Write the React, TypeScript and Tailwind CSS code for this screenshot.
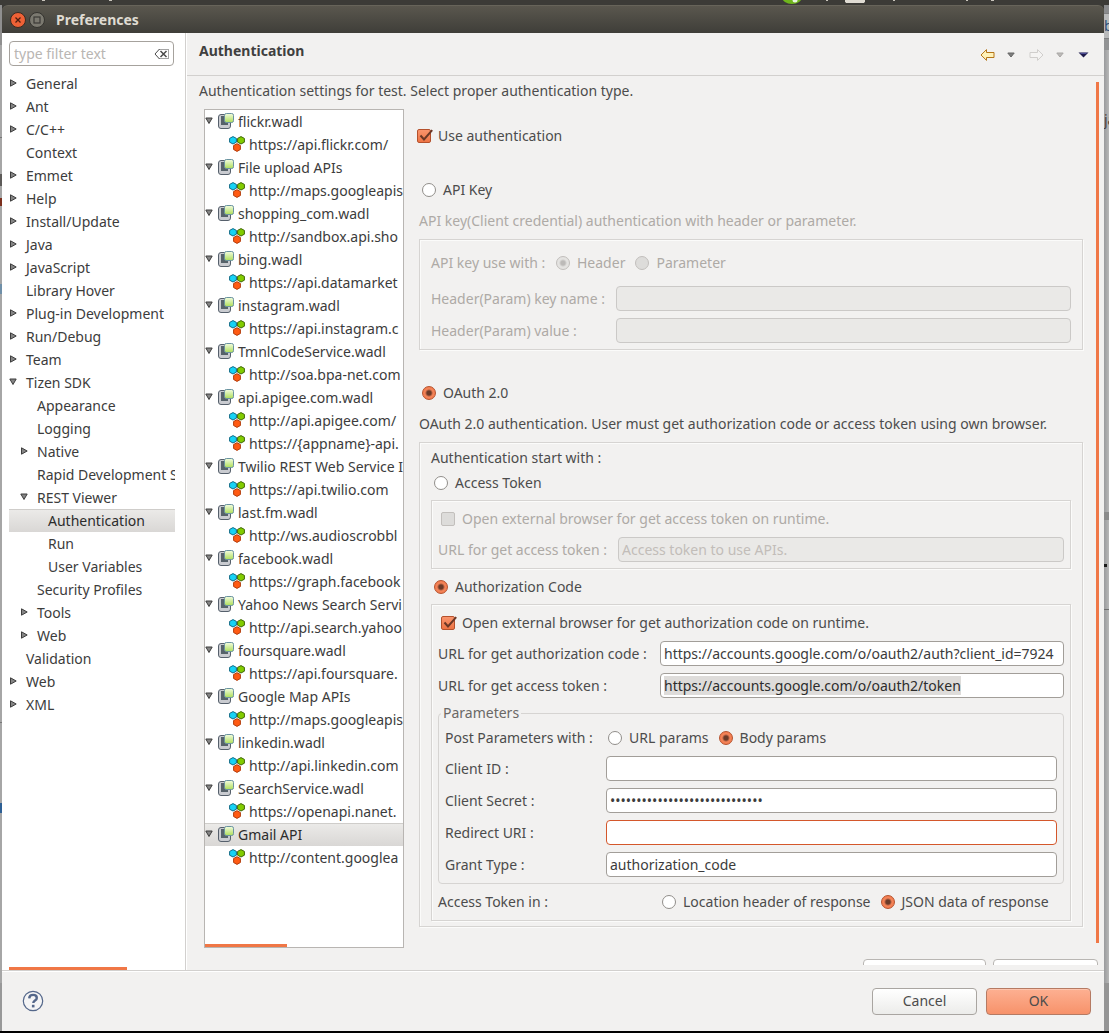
import { useEffect, useRef, type ReactNode } from "react";

type NavItem = { label: string; level: number; arrow?: "open" | "closed"; selected?: boolean };

const navItems: NavItem[] = [
  { label: "General", level: 0, arrow: "closed" },
  { label: "Ant", level: 0, arrow: "closed" },
  { label: "C/C++", level: 0, arrow: "closed" },
  { label: "Context", level: 0 },
  { label: "Emmet", level: 0, arrow: "closed" },
  { label: "Help", level: 0, arrow: "closed" },
  { label: "Install/Update", level: 0, arrow: "closed" },
  { label: "Java", level: 0, arrow: "closed" },
  { label: "JavaScript", level: 0, arrow: "closed" },
  { label: "Library Hover", level: 0 },
  { label: "Plug-in Development", level: 0, arrow: "closed" },
  { label: "Run/Debug", level: 0, arrow: "closed" },
  { label: "Team", level: 0, arrow: "closed" },
  { label: "Tizen SDK", level: 0, arrow: "open" },
  { label: "Appearance", level: 1 },
  { label: "Logging", level: 1 },
  { label: "Native", level: 1, arrow: "closed" },
  { label: "Rapid Development S", level: 1 },
  { label: "REST Viewer", level: 1, arrow: "open" },
  { label: "Authentication", level: 2, selected: true },
  { label: "Run", level: 2 },
  { label: "User Variables", level: 2 },
  { label: "Security Profiles", level: 1 },
  { label: "Tools", level: 1, arrow: "closed" },
  { label: "Web", level: 1, arrow: "closed" },
  { label: "Validation", level: 0 },
  { label: "Web", level: 0, arrow: "closed" },
  { label: "XML", level: 0, arrow: "closed" },
];

const indents = ["pl-0", "pl-[11px]", "pl-[22px]"];

const services: { name: string; urls: string[]; selected?: boolean }[] = [
  { name: "flickr.wadl", urls: ["https://api.flickr.com/"] },
  { name: "File upload APIs", urls: ["http://maps.googleapis"] },
  { name: "shopping_com.wadl", urls: ["http://sandbox.api.sho"] },
  { name: "bing.wadl", urls: ["https://api.datamarket"] },
  { name: "instagram.wadl", urls: ["https://api.instagram.c"] },
  { name: "TmnlCodeService.wadl", urls: ["http://soa.bpa-net.com"] },
  { name: "api.apigee.com.wadl", urls: ["http://api.apigee.com/", "https://{appname}-api."] },
  { name: "Twilio REST Web Service I", urls: ["https://api.twilio.com"] },
  { name: "last.fm.wadl", urls: ["http://ws.audioscrobbl"] },
  { name: "facebook.wadl", urls: ["https://graph.facebook"] },
  { name: "Yahoo News Search Servi", urls: ["http://api.search.yahoo"] },
  { name: "foursquare.wadl", urls: ["https://api.foursquare."] },
  { name: "Google Map APIs", urls: ["http://maps.googleapis"] },
  { name: "linkedin.wadl", urls: ["http://api.linkedin.com"] },
  { name: "SearchService.wadl", urls: ["https://openapi.nanet."] },
  { name: "Gmail API", urls: ["http://content.googlea"], selected: true },
];

function Arrow({ kind }: { kind: "open" | "closed" }) {
  return (
    <svg viewBox="0 0 8 8" className="mb-0.5 size-2 shrink-0" fill="#858585" stroke="#3d3d3d" strokeWidth="1">
      {kind === "open" ? <path d="M.8 1h6.400L4 6.500z" /> : <path d="M1.500.800l5.700 3.200-5.700 3.200z" />}
    </svg>
  );
}

function WadlIcon() {
  return (
    <svg viewBox="0 0 16 16" className="size-4 shrink-0">
      <defs>
        <linearGradient id="note" x1="0" y1="0" x2="0" y2="1">
          <stop offset="0" stopColor="#f3fce2" />
          <stop offset="1" stopColor="#aede58" />
        </linearGradient>
      </defs>
      <rect x="0.5" y="1.5" width="12" height="14" rx="2.500" fill="#c9cbd0" stroke="#56606c" />
      <rect x="3" y="3" width="7" height="9" fill="#56626a" />
      <rect x="6.500" y="0.500" width="9" height="9" rx="1.800" fill="url(#note)" stroke="#6a93a0" />
    </svg>
  );
}

function EndpointIcon() {
  return (
    <svg viewBox="0 0 16 16" className="size-4 shrink-0">
      <path d="M4 .6l3.400 1.800v3.800L4 8l-3.400-1.800V2.400z" fill="#16d3f5" stroke="#136a86" />
      <path d="M12 .6l3.400 1.800v3.800L12 8 8.600 6.200V2.400z" fill="#82cc00" stroke="#3f6608" />
      <path d="M8 7.700l3.400 1.800v4L8 15.400l-3.400-1.900v-4z" fill="#ff5a12" stroke="#b23d0c" />
    </svg>
  );
}

function Radio({
  label,
  name,
  checked,
  disabled,
}: {
  label: string;
  name: string;
  checked?: boolean;
  disabled?: boolean;
}) {
  return (
    <label className={`flex h-6 items-center gap-[7px] whitespace-nowrap ${disabled ? "text-[#aeaaa6]" : ""}`}>
      <input
        type="radio"
        name={name}
        defaultChecked={checked}
        disabled={disabled}
        className="size-3.5 shrink-0 appearance-none rounded-full border border-[#918e8a] bg-white checked:border-[#b5512c] checked:bg-[radial-gradient(circle,#6b3a28_0_2px,#f58459_4px,#ee7444)] disabled:border-[#c2bfbc] disabled:bg-[#dddcda] disabled:checked:border-[#c2bfbc] disabled:checked:bg-[radial-gradient(circle,#bcbab8_0_2px,#e4e3e1_4px)]"
      />
      {label}
    </label>
  );
}

function Check({ label, checked, disabled }: { label: string; checked?: boolean; disabled?: boolean }) {
  return (
    <label className={`flex h-6 items-center gap-[7px] whitespace-nowrap ${disabled ? "text-[#aeaaa6]" : ""}`}>
      <span className="relative flex size-3.5 shrink-0">
        <input
          type="checkbox"
          defaultChecked={checked}
          disabled={disabled}
          className="peer size-3.5 appearance-none rounded-[2px] border border-[#918e8a] bg-white checked:border-[#b5512c] checked:bg-linear-to-b checked:from-[#f9946c] checked:to-[#ee7444] disabled:border-[#c2bfbc] disabled:bg-[#dddcda]"
        />
        <svg
          viewBox="0 0 16 16"
          className="pointer-events-none absolute top-0 left-0 hidden size-4 peer-checked:block"
          fill="none"
          stroke="#6b3826"
          strokeWidth="2"
        >
          <path d="M3.500 6.500l3.500 4 8.200-9.300" />
        </svg>
      </span>
      {label}
    </label>
  );
}

const fieldBase =
  "h-[25px] w-full min-w-0 rounded-[4px] border px-[3px] text-[14px] outline-none placeholder:text-[#c2bdb9]";
const fieldTones = {
  normal: "border-[#a29e99] bg-white text-[#3c3c3c]",
  focused: "border-[#d4572b] bg-white text-[#3c3c3c]",
  disabled: "border-[#cbc9c7] bg-[#eae9e7] text-[#c2bdb9]",
};

function Field({
  id,
  label,
  labelWidth,
  tone = "normal",
  value,
  placeholder,
  type = "text",
  preselected,
}: {
  id: string;
  label: string;
  labelWidth: string;
  tone?: keyof typeof fieldTones;
  value?: string;
  placeholder?: string;
  type?: string;
  preselected?: boolean;
}) {
  const ref = useRef<HTMLInputElement>(null);
  useEffect(() => {
    if (preselected) {
      ref.current?.focus();
      ref.current?.select();
    }
  }, [preselected]);
  return (
    <div className="flex items-center">
      <label
        htmlFor={id}
        className={`shrink-0 whitespace-nowrap ${labelWidth} ${tone === "disabled" ? "text-[#aeaaa6]" : ""}`}
      >
        {label}
      </label>
      <input
        ref={ref}
        id={id}
        type={type}
        defaultValue={value}
        placeholder={placeholder}
        disabled={tone === "disabled"}
        className={`${fieldBase} ${fieldTones[tone]} selection:bg-[#dedcda] selection:text-[#2c2c2c]`}
      />
    </div>
  );
}

function Group({ className, children }: { className: string; children: ReactNode }) {
  return (
    <div className={`border border-[#d6d4d2] shadow-[1px_1px_0_#fbfbfa,inset_1px_1px_0_#fbfbfa] ${className}`}>
      {children}
    </div>
  );
}

function TitleBar() {
  return (
    <header className="flex h-7 items-center rounded-t-md border-t border-[#67645a] bg-linear-to-b from-[#5a574e] to-[#3f3e39] pl-2">
      <button aria-label="Close" className="size-4">
        <svg viewBox="0 0 16 16" className="size-4">
          <circle cx="8" cy="8" r="7.5" fill="#ee6136" stroke="#3a2a22" />
          <path d="M5.500 5.500l5 5M10.500 5.500l-5 5" stroke="#4a1e10" strokeWidth="1.300" />
        </svg>
      </button>
      <button aria-label="Maximize" className="ml-[3px] size-4">
        <svg viewBox="0 0 16 16" className="size-4">
          <circle cx="8" cy="8" r="7.5" fill="#7b7970" stroke="#34332f" />
          <rect x="5" y="5" width="6" height="6" fill="none" stroke="#3b3a36" strokeWidth="1.200" />
        </svg>
      </button>
      <h1 className="ml-[11px] text-[14px] font-bold text-[#dfdbd2]">Preferences</h1>
    </header>
  );
}

function Sidebar() {
  return (
    <aside className="flex w-[184px] shrink-0 flex-col border-r border-[#d2d0ce] bg-white pt-2 pl-[7px] text-[#3c3c3c]">
      <div className="mr-[11px] flex h-[25px] items-center rounded-[4px] border border-[#a6a29d] pr-1 pl-1">
        <input
          aria-label="Filter"
          placeholder="type filter text"
          className="w-full min-w-0 outline-none placeholder:text-[#b9b6b3]"
        />
        <button aria-label="Clear filter" className="shrink-0">
          <svg viewBox="0 0 15 12" className="h-3 w-[15px]" fill="none" stroke="#4a4a4a">
            <path d="M5.500 1L1 6l4.500 5" />
            <path d="M5.500 1.500h9v9h-9" strokeDasharray="1 1" />
            <path d="M6.500 3l6 6M12.500 3l-6 6" strokeWidth="1.500" />
          </svg>
        </button>
      </div>
      <ul className="mt-1.5 mr-2.5">
        {navItems.map((item, i) => (
          <li key={i}>
            <a
              href="#"
              className={`flex h-[23px] items-center overflow-hidden whitespace-nowrap ${indents[item.level]} ${
                item.selected ? "border-t border-[#cfcdca] bg-linear-to-b from-[#ebeae8] to-[#d9d7d5] text-[#2c2c2c]" : ""
              }`}
            >
              <span className="flex w-[17px] shrink-0">{item.arrow && <Arrow kind={item.arrow} />}</span>
              {item.label}
            </a>
          </li>
        ))}
      </ul>
      <div className="mt-auto h-[3px] w-[118px] bg-[#f07746]" />
    </aside>
  );
}

function PageHeader() {
  return (
    <div className="flex h-[43px] items-start justify-between border-b border-[#d2d0ce] pt-2 pr-[15px] pl-3">
      <h2 className="h-5 leading-5 font-bold text-[#3f3f3f]">Authentication</h2>
      <div className="flex h-7 items-center">
        <button aria-label="Back">
          <svg viewBox="0 0 15 12" className="h-3 w-[15px]" fill="#fff2b8" stroke="#b5761a">
            <path d="M1 6l5.500-5.400V3.500H14v5H6.500v2.900z" />
          </svg>
        </button>
        <button aria-label="Back history" className="ml-3">
          <svg viewBox="0 0 8 6" className="h-1.5 w-2" fill="#7e7e7e" stroke="#666">
            <path d="M.8 1h6.400L4 5z" />
          </svg>
        </button>
        <button aria-label="Forward" className="ml-3.5" disabled>
          <svg viewBox="0 0 15 12" className="h-3 w-[15px]" fill="#f5f4f3" stroke="#d0cecc">
            <path d="M14 6L8.500.600V3.500H1v5h7.500v2.900z" />
          </svg>
        </button>
        <button aria-label="Forward history" className="ml-3" disabled>
          <svg viewBox="0 0 8 6" className="h-1.5 w-2" fill="#bdbbb9" stroke="#a9a7a5">
            <path d="M.8 1h6.400L4 5z" />
          </svg>
        </button>
        <button aria-label="Menu" className="ml-3.5">
          <svg viewBox="0 0 11 6" className="h-1.5 w-[11px]">
            <path d="M.500.500h10l-5 5z" fill="#1d1a4a" />
            <path d="M2.500 1.300h6" stroke="#5c5ca8" />
          </svg>
        </button>
      </div>
    </div>
  );
}

function ServiceTree() {
  return (
    <div className="ml-[5px] flex w-[200px] shrink-0 flex-col overflow-hidden border border-[#b8b5b2] bg-white text-[#3c3c3c]">
      <ul>
        {services.map((service) => (
          <li key={service.name}>
            <div
              className={`flex h-[23px] items-center whitespace-nowrap ${
                service.selected ? "border-t border-[#cfcdca] bg-linear-to-b from-[#ebeae8] to-[#d9d7d5] text-[#2c2c2c]" : ""
              }`}
            >
              <Arrow kind="open" />
              <span className="mr-1 mb-0.5 ml-[5px] flex">
                <WadlIcon />
              </span>
              {service.name}
            </div>
            <ul>
              {service.urls.map((url) => (
                <li key={url} className="flex h-[23px] items-center gap-1 pl-6 whitespace-nowrap">
                  <span className="mb-0.5 flex">
                    <EndpointIcon />
                  </span>
                  {url}
                </li>
              ))}
            </ul>
          </li>
        ))}
      </ul>
      <div className="mt-auto h-[3px] w-[82px] bg-[#f07746]" />
    </div>
  );
}

function AuthForm() {
  return (
    <form className="min-w-0 flex-1 pr-[13px] pl-[13px]">
      <div className="pt-[15px]">
        <Check label="Use authentication" checked />
      </div>
      <div className="pl-0.5">
        <div className="mt-[30px] pl-[3px]">
          <Radio name="scheme" label="API Key" />
        </div>
        <p className="mt-[7px] h-6 leading-6 text-[#aeaaa6]">
          API key(Client credential) authentication with header or parameter.
        </p>
        <Group className="mt-1.5 px-[11px] pt-[11px] pb-1.5">
          <div className="flex items-center gap-2.5">
            <span className="w-[115px] whitespace-nowrap text-[#aeaaa6]">API key use with :</span>
            <Radio name="keyuse" label="Header" checked disabled />
            <Radio name="keyuse" label="Parameter" disabled />
          </div>
          <div className="mt-[11px] flex flex-col gap-[7px]">
            <Field id="keyname" label="Header(Param) key name :" labelWidth="w-[185px]" tone="disabled" />
            <Field id="keyvalue" label="Header(Param) value :" labelWidth="w-[185px]" tone="disabled" />
          </div>
        </Group>
        <div className="mt-[31px] pl-[3px]">
          <Radio name="scheme" label="OAuth 2.0" checked />
        </div>
        <p className="mt-[7px] h-6 leading-6 whitespace-nowrap">
          OAuth 2.0 authentication. User must get authorization code or access token using own browser.
        </p>
        <Group className="mt-1.5 px-[11px] pt-[3px] pb-[5px]">
          <p className="h-[25px] leading-6">Authentication start with :</p>
          <div className="pl-[3px]">
            <Radio name="start" label="Access Token" />
          </div>
          <Group className="mt-[5px] p-1.5">
            <div className="pl-[3px]">
              <Check label="Open external browser for get access token on runtime." disabled />
            </div>
            <div className="mt-1.5">
              <Field
                id="token-url"
                label="URL for get access token :"
                labelWidth="w-[180px]"
                tone="disabled"
                placeholder="Access token to use APIs."
              />
            </div>
          </Group>
          <div className="mt-1.5 pl-[3px]">
            <Radio name="start" label="Authorization Code" checked />
          </div>
          <Group className="mt-[5px] p-1.5">
            <div className="pl-[3px]">
              <Check label="Open external browser for get authorization code on runtime." checked />
            </div>
            <div className="mt-1.5 flex flex-col gap-[7px]">
              <Field
                id="code-url"
                label="URL for get authorization code :"
                labelWidth="w-[222px]"
                value="https://accounts.google.com/o/oauth2/auth?client_id=7924"
              />
              <Field
                id="access-url"
                label="URL for get access token :"
                labelWidth="w-[222px]"
                value="https://accounts.google.com/o/oauth2/token"
                preselected
              />
            </div>
            <fieldset className="mt-[5px] min-w-0 rounded-[4px] border border-[#d6d4d2] px-1.5 pt-[3px] pb-1.5">
              <legend className="-ml-1 h-5 px-0.5 leading-5 text-[#6a6866]">Parameters</legend>
              <div className="flex items-center gap-2.5">
                <span className="w-[153px] whitespace-nowrap">Post Parameters with :</span>
                <Radio name="post" label="URL params" />
                <Radio name="post" label="Body params" checked />
              </div>
              <div className="mt-1.5 flex flex-col gap-[7px]">
                <Field id="client-id" label="Client ID :" labelWidth="w-[161px]" />
                <Field
                  id="client-secret"
                  label="Client Secret :"
                  labelWidth="w-[161px]"
                  type="password"
                  value="abcdefghijklmnopqrstuvwxyzabc"
                />
                <Field id="redirect" label="Redirect URI :" labelWidth="w-[161px]" tone="focused" />
                <Field id="grant" label="Grant Type :" labelWidth="w-[161px]" value="authorization_code" />
              </div>
            </fieldset>
            <div className="mt-1.5 flex items-center gap-2.5">
              <span className="w-[214px] shrink-0">Access Token in :</span>
              <Radio name="tokenin" label="Location header of response" />
              <Radio name="tokenin" label="JSON data of response" checked />
            </div>
          </Group>
        </Group>
      </div>
    </form>
  );
}

function LeftEdge() {
  return (
    <div className="flex w-0.5 shrink-0 flex-col bg-[#a6a6a6]">
      <div className="h-10 bg-[#8f8f8f]" />
      <div className="mt-[92px] h-px bg-[#777]" />
      <div className="mt-9 h-3 bg-[#5d5a58]" />
      <div className="mt-3 h-2 bg-[#7b2f1d]" />
      <div className="mt-[78px] h-2.5 bg-[#6f8fa8]" />
      <div className="mt-[428px] h-px bg-[#777]" />
      <div className="mt-20 h-2.5 bg-[#2d5f94]" />
      <div className="mt-auto h-12 bg-[#989898]" />
    </div>
  );
}

function RightEdge() {
  return (
    <div className="flex w-[5px] shrink-0 flex-col overflow-hidden bg-linear-to-r from-[#9a9b9d] to-[#b8b8b8]">
      <div className="h-2 bg-[#8a8b8d]" />
      <div className="flex h-[26px] items-center border-y border-[#7e7f80] bg-[#b9babb] text-[#2f4f78]">b</div>
      <div className="h-[11px] bg-[#929394]" />
      <div className="mt-[60px] h-5 leading-5 text-[#4a3c38]">ja</div>
      <div className="mt-[382px] h-2 bg-[#8b8b8b]" />
      <div className="mt-11 h-[3px] w-[3px] bg-[#1b1b1b]" />
      <div className="mt-[42px] h-px bg-[#6f6f6f]" />
      <div className="mt-auto h-12 bg-[#959595]" />
    </div>
  );
}

export default function App() {
  return (
    <div className="flex min-h-screen flex-col bg-[#3c3b37] font-['Noto_Sans','Open_Sans',sans-serif] text-[14px] leading-5 text-[#4c4c4c]">
      <div className="flex h-[5px] items-start overflow-hidden bg-[#3c3b37]">
        <svg viewBox="0 0 1109 5" className="h-[5px] w-full" preserveAspectRatio="xMaxYMin slice">
          <ellipse cx="792" cy="-3" rx="10" ry="7" fill="#6fb51c" />
          <circle cx="795" cy="0" r="2.500" fill="#e8f5e0" />
          <path d="M845 0h20v1.500l-1 1.500h-18l-1-1.500z" fill="#dfdbd2" />
          <path d="M826 0h2v1h-2zM893 0h2v1h-2zM966 0h2v1h-2zM991 0h3v1h-3zM42 0h3v1h-3zM109 0h3v1h-3z" fill="#c9c5bc" />
        </svg>
      </div>
      <div className="flex flex-1">
        <LeftEdge />
        <div className="flex min-w-0 flex-1 flex-col">
          <TitleBar />
          <div className="flex flex-1 bg-[#f2f1f0]">
            <Sidebar />
            <main className="flex min-w-0 flex-1 flex-col border-l border-white">
              <PageHeader />
              <div className="flex flex-1">
                <div className="flex min-w-0 flex-1 flex-col pt-[3px] pl-3">
                  <p className="h-6 leading-6">Authentication settings for test. Select proper authentication type.</p>
                  <div className="mt-1.5 flex flex-1">
                    <ServiceTree />
                    <AuthForm />
                  </div>
                </div>
                <div className="mt-1.5 mr-[5px] mb-[5px] w-[3px] bg-[#f07746]" />
              </div>
              <div className="mt-[11px] mr-1.5 mb-[5px] flex h-1.5 items-start justify-end gap-[7px] overflow-hidden">
                <button
                  aria-label="Restore Defaults"
                  className="h-7 w-[123px] rounded-[4px] border border-[#b9b6b3] bg-white"
                />
                <button aria-label="Apply" className="h-7 w-[105px] rounded-[4px] border border-[#b9b6b3] bg-white" />
              </div>
            </main>
          </div>
          <footer className="flex h-[61px] items-center border-t border-[#d2d0ce] bg-[#f2f1f0] pr-[13px] pl-5 shadow-[inset_0_1px_0_#fff]">
            <button aria-label="Help">
              <svg viewBox="0 0 22 22" className="size-[22px]" fill="none" stroke="#54678a">
                <circle cx="11" cy="11" r="9.700" fill="#f4f4f5" strokeWidth="1.200" />
                <path d="M7.200 8.300c.2-2.300 1.800-3.400 3.900-3.400 2.200 0 3.700 1.200 3.700 3 0 2.700-3.500 2.600-3.500 5.200" strokeWidth="2.400" />
                <path d="M11.200 14.800v2.600" strokeWidth="2.600" />
              </svg>
            </button>
            <button className="ml-auto h-[27px] w-[105px] rounded-[4px] border border-[#a9a5a1] bg-linear-to-b from-white to-[#ececea]">
              Cancel
            </button>
            <button className="ml-[9px] h-[27px] w-[105px] rounded-[4px] border border-[#b57a63] bg-linear-to-b from-[#fdb092] to-[#f7926a] shadow-[inset_0_1px_0_#fdc4ae]">
              OK
            </button>
          </footer>
        </div>
        <RightEdge />
      </div>
      <div className="h-0.5 bg-black" />
    </div>
  );
}
